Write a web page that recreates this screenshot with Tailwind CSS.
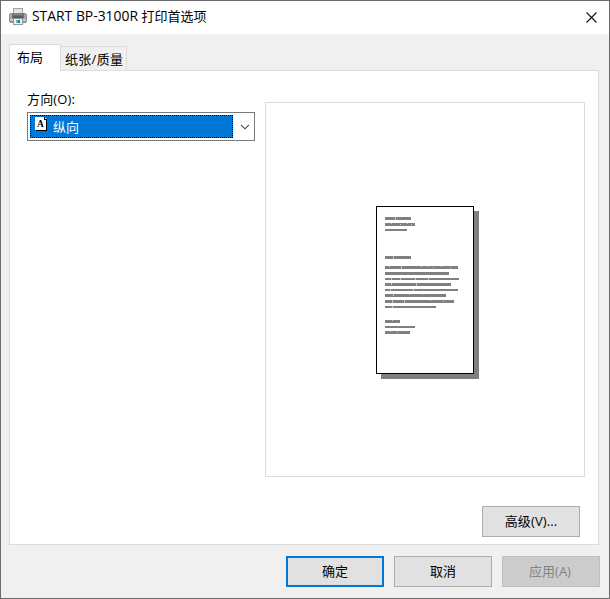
<!DOCTYPE html>
<html lang="zh-CN">
<head>
<meta charset="utf-8">
<title>打印首选项</title>
<script src="https://cdn.jsdelivr.net/npm/@tailwindcss/browser@4"></script>
</head>
<body class="font-['Open_Sans','Noto_Sans_CJK_SC',sans-serif] text-[13px] leading-[18px] text-black">
<div class="flex h-[599px] w-[610px] flex-col overflow-hidden border border-[#6b6b6b] bg-[#f0f0f0]">
  <header class="flex h-[33px] shrink-0 items-center bg-white pl-2 pr-[12px]">
    <svg class="-mt-px h-[18px] w-[18px] shrink-0" viewBox="0 0 18 18" shape-rendering="crispEdges">
      <path d="M4 0h10v6H4z" fill="#a0a4a7"/>
      <path d="M5 1h8v5H5z" fill="#e2e4e5"/>
      <path d="M1 5h16v1h1v8h-1v1H1v-1H0V6h1z" fill="#8d9295"/>
      <path d="M3 5h12v5H3z" fill="#6b7175"/>
      <path d="M4 5h10v2H4z" fill="#7d8488"/>
      <path d="M4 8h10v2H4z" fill="#555b60"/>
      <path d="M1 6h2v5H1zM15 6h2v5h-2z" fill="#a3a8ab"/>
      <path d="M1 11h16v2H1z" fill="#c6cacc"/>
      <path d="M4 11h10v6H4z" fill="#8f979b"/>
      <path d="M5 11h8v5H5z" fill="#e5f2f5"/>
      <path d="M7 12h2v3H7z" fill="#69b5bd"/><path d="M9 12h2v3H9z" fill="#267c91"/>
    </svg>
    <h1 class="-mt-[3px] ml-[5px] w-[180px] whitespace-nowrap"><span class="text-[13.9px]">START BP-3100R</span> 打印首选项</h1>
    <svg class="ml-auto h-[11px] w-[11px]" viewBox="0 0 11 11" fill="none" stroke="#111" stroke-width="1.1"><path d="M.5.5l10 10M10.500.5l-10 10"/></svg>
  </header>
  <main class="flex flex-1 flex-col pl-2 pr-[10px] pt-[10px]">
    <nav class="flex h-[26px] items-end">
      <div class="z-10 -mb-px h-[27px] w-[52px] border border-b-0 border-[#dcdcdc] bg-white pl-[7px] pt-[3px]">布局</div>
      <div class="-ml-px h-[24px] w-[67px] whitespace-nowrap border border-b-0 border-[#dcdcdc] bg-[#f0f0f0] pl-[4px] pt-[3px] tracking-[0.3px]">纸张/质量</div>
    </nav>
    <section class="flex h-[475px] w-[590px] flex-col border border-[#dcdcdc] bg-white pl-[17px] pr-[13px] pt-[19px]">
      <div class="flex h-[387px] gap-[10px]">
        <div class="w-[228px]">
          <div class="h-[22px] tracking-[0.15px]">方向(O):</div>
          <div class="flex h-[29px] border border-[#7a7a7a] bg-white p-[2px]">
            <div class="flex h-[23px] w-[203px] border border-dotted border-black bg-[#0078d7] pl-[4px] text-white">
              <svg class="h-[16px] w-[13px] shrink-0" viewBox="0 0 13 16" shape-rendering="crispEdges">
                <path d="M1 2h10l1 2v11H1z" fill="#000"/><path d="M0 1h9l2 2v11H0z" fill="#fff"/><path d="M9 1v3h3V3h-1V2h-1V1z" fill="#000"/><path d="M10 2h1v1h-1z" fill="#fff"/>
                <text x="5.500" y="11" font-family="Liberation Serif, serif" font-size="9.500" font-weight="bold" text-anchor="middle" fill="#000">A</text>
              </svg>
              <span class="ml-[5px] pt-[2px]">纵向</span>
            </div>
            <svg class="ml-[7px] mt-[9px] h-[6px] w-[10px]" viewBox="0 0 10 6" fill="none" stroke="#444" stroke-width="1.1"><path d="M1 .8l4 4 4-4"/></svg>
          </div>
        </div>
        <div class="mt-[12px] h-[375px] w-[320px] border border-[#dcdcdc] pl-[110px] pt-[103px]">
          <svg class="h-[173px] w-[103px]" viewBox="0 0 103 173" shape-rendering="crispEdges">
            <path d="M5 5h98v168H5z" fill="#808080"/>
            <path d="M.5.5h97v167H.5z" fill="#fff" stroke="#000"/>
            <g fill="#808080">
              <path d="M9 11h26v3H9zM9 17h30v3H9zM9 23h22v2H9z"/>
              <path d="M9 50h26v3H9z"/>
              <path d="M9 60h73v3H9zM9 66h64v3H9zM9 72h74v2H9zM9 77h66v3H9zM9 83h73v2H9zM9 88h61v3H9zM9 94h69v3H9zM9 100h51v2H9z"/>
              <path d="M9 114h15v3H9zM9 120h30v2H9zM9 125h25v3H9z"/>
            </g>
            <g fill="#c8c8c8">
              <path d="M19 11h1v3h-1zM17 50h1v3h-1zM13 60h1v1h-1zM25 60h1v3h-1zM15 72h1v2h-1zM24 72h1v2h-1zM39 72h1v2h-1zM52 72h1v2h-1zM15 77h1v2h-1zM40 77h1v3h-1zM14 83h1v2h-1zM37 83h1v2h-1zM16 94h1v3h-1zM28 94h1v3h-1zM16 100h1v2h-1zM17 88h1v2h-1z"/>
              <path d="M15 17h1v1h-1zM24 18h1v1h-1zM31 17h1v1h-1zM35 18h1v1h-1zM45 60h1v1h-1zM51 60h1v1h-1zM57 61h1v1h-1zM65 60h1v1h-1zM74 61h1v1h-1zM33 88h1v1h-1zM46 88h1v1h-1zM54 94h1v1h-1zM67 95h1v1h-1zM16 114h1v1h-1zM14 125h1v1h-1zM21 126h1v1h-1z"/>
            </g>
          </svg>
        </div>
      </div>
      <div class="mt-[29px] flex justify-end pr-[5px]">
        <button class="h-[31px] w-[98px] border border-[#adadad] bg-[#e1e1e1] pb-[2px] tracking-[0.1px]">高级(V)...</button>
      </div>
    </section>
    <footer class="mt-[11px] flex w-[591px] justify-end gap-[10px]">
      <button class="h-[31px] w-[98px] border-2 border-[#0078d7] bg-[#e1e1e1] pb-[2px]">确定</button>
      <button class="h-[31px] w-[98px] border border-[#adadad] bg-[#e1e1e1] pb-[2px]">取消</button>
      <button class="h-[31px] w-[98px] border border-[#bfbfbf] bg-[#cccccc] pb-[2px] pr-[2px] text-[#838383]">应用(A)</button>
    </footer>
  </main>
</div>
</body>
</html>
